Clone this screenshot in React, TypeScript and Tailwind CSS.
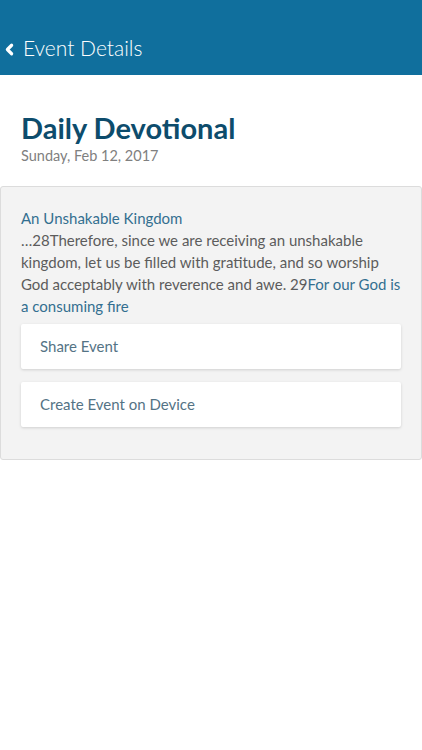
import { ChevronLeft } from 'lucide-react'

const font = { fontFamily: 'Lato, "Open Sans", sans-serif' }

export default function App() {
  return (
    <div className="w-[422px] h-[750px] bg-white" style={font}>
      {/* Header */}
      <header className="h-[75px] bg-[#106f9d] flex items-end pb-[13px] pl-[1px]">
        <ChevronLeft size={17} strokeWidth={4.5} className="text-white mb-[4px]" />
        <h1 className="ml-[5px] text-[21px] font-light text-white leading-[28px]">Event Details</h1>
      </header>

      {/* Title */}
      <div className="px-[21px] pt-[36px] pb-[20px]">
        <h2 className="text-[29px] font-bold text-[#0d4c6c] leading-[34px]">Daily Devotional</h2>
        <p className="text-[14.5px] text-[#808080] leading-[20px] mt-[1px]">Sunday, Feb 12, 2017</p>
      </div>

      {/* Card */}
      <div className="bg-[#f3f3f3] border border-[#dcdcdc] rounded-[3px] px-[20px] pt-[20px] pb-[32px]">
        <p className="text-[15px] text-[#336f90] leading-[21px] pt-[0.5px]">An Unshakable Kingdom</p>
        <p className="text-[15px] text-[#5c5c5c] leading-[22px]">
          …28Therefore, since we are receiving an unshakable kingdom, let us be filled with gratitude, and so worship God acceptably with reverence and awe. 29<span className="text-[#336f90]">For our God is a consuming fire</span>
        </p>

        <div className="mt-[7px] flex flex-col gap-[13px]">
          {['Share Event', 'Create Event on Device'].map(t => (
            <button
              key={t}
              className="h-[45px] w-full bg-white rounded-[2px] shadow-[0_1px_3px_rgba(0,0,0,0.15)] text-left pl-[19px] text-[15px] text-[#547385]"
            >
              {t}
            </button>
          ))}
        </div>
      </div>
    </div>
  )
}
